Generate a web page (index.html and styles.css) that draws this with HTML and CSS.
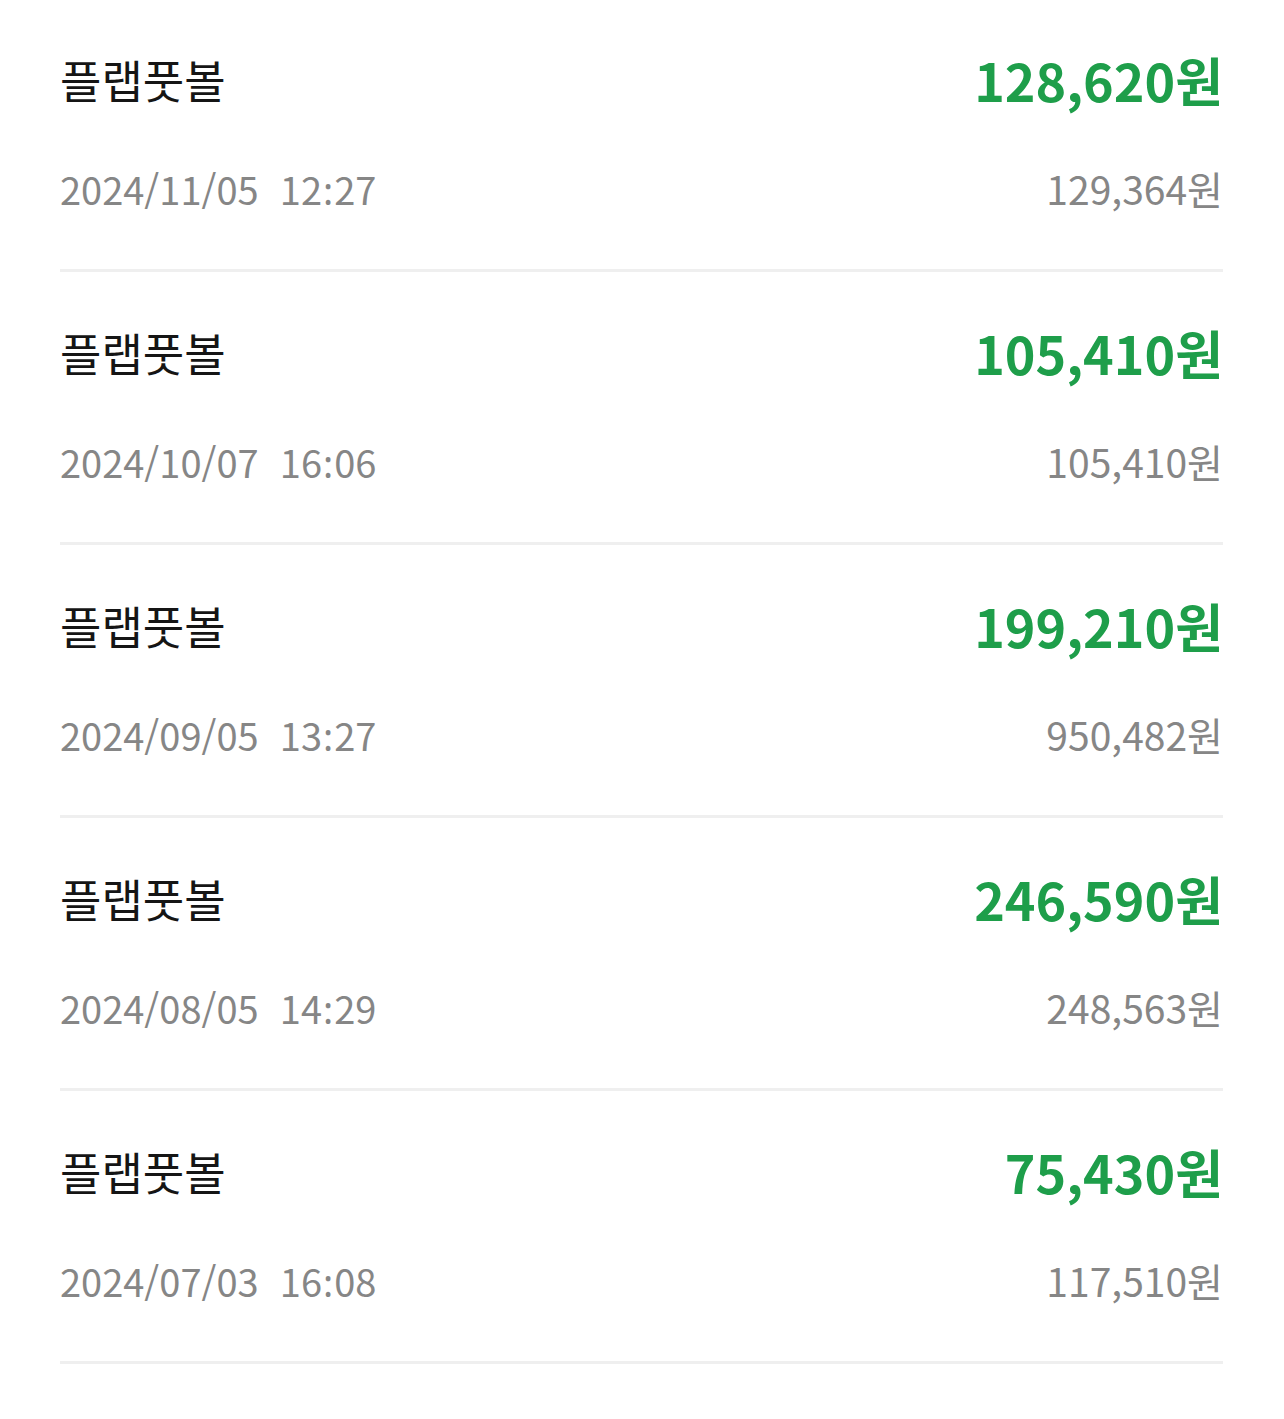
FILE: index.html
```html
<!DOCTYPE html>
<html lang="ko">
<head>
  <meta charset="UTF-8">
  <meta name="viewport" content="width=device-width, initial-scale=1.0">
  <title>결제 내역</title>
  <link rel="stylesheet" href="styles.css">
</head>
<body>
  <ul class="history">
    <li class="item">
      <div class="line">
        <span class="name">플랩풋볼</span>
        <span class="amount">128,620원</span>
      </div>
      <div class="line sub">
        <span class="date">2024/11/05&nbsp;&nbsp;12<span class="colon">:</span>27</span>
        <span class="balance">129,364원</span>
      </div>
    </li>
    <li class="item">
      <div class="line">
        <span class="name">플랩풋볼</span>
        <span class="amount">105,410원</span>
      </div>
      <div class="line sub">
        <span class="date">2024/10/07&nbsp;&nbsp;16<span class="colon">:</span>06</span>
        <span class="balance">105,410원</span>
      </div>
    </li>
    <li class="item">
      <div class="line">
        <span class="name">플랩풋볼</span>
        <span class="amount">199,210원</span>
      </div>
      <div class="line sub">
        <span class="date">2024/09/05&nbsp;&nbsp;13<span class="colon">:</span>27</span>
        <span class="balance">950,482원</span>
      </div>
    </li>
    <li class="item">
      <div class="line">
        <span class="name">플랩풋볼</span>
        <span class="amount">246,590원</span>
      </div>
      <div class="line sub">
        <span class="date">2024/08/05&nbsp;&nbsp;14<span class="colon">:</span>29</span>
        <span class="balance">248,563원</span>
      </div>
    </li>
    <li class="item">
      <div class="line">
        <span class="name">플랩풋볼</span>
        <span class="amount">75,430원</span>
      </div>
      <div class="line sub">
        <span class="date">2024/07/03&nbsp;&nbsp;16<span class="colon">:</span>08</span>
        <span class="balance">117,510원</span>
      </div>
    </li>
  </ul>
</body>
</html>
```

FILE: styles.css
```css
body {
  margin: 0;
  background: #ffffff;
  font-family: "Noto Sans CJK KR", "Noto Sans", sans-serif;
  color: #111111;
}
.history {
  list-style: none;
  margin: -1px 61px 0 60px;
  padding: 0;
}
.item {
  display: flex;
  flex-direction: column;
  padding-top: 50px;
  height: 220px;
  border-bottom: 3px solid #efefef;
}
.line {
  display: flex;
  justify-content: space-between;
  align-items: center;
  height: 60px;
}
.line.sub {
  margin-top: 54px;
  height: 50px;
}
.name {
  font-size: 45px;
  color: #151515;
}
.amount {
  font-size: 52px;
  font-weight: 700;
  color: #1e9e4a;
}
.date {
  font-size: 38px;
  color: #868686;
}
.colon {
  font-family: "Noto Sans", sans-serif;
  padding: 0 1px;
}
.balance {
  font-size: 39px;
  color: #868686;
}
```
